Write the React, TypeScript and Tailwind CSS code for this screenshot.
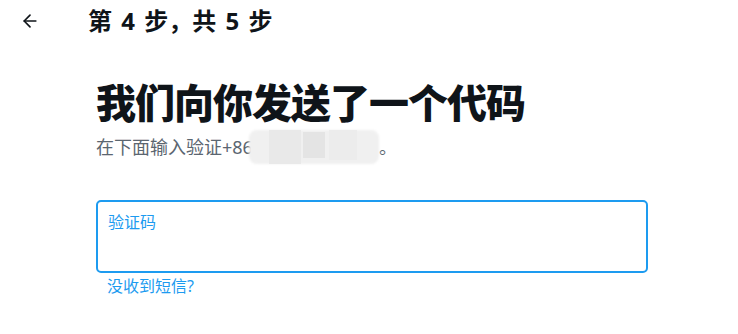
import { ArrowLeft } from 'lucide-react';

export default function App() {
  return (
    <div
      className="w-[738px] h-[334px] bg-white text-[#0f1419] overflow-hidden"
      style={{ fontFamily: '"Noto Sans", "Noto Sans CJK SC", sans-serif' }}
    >
      <div className="flex items-center h-[42px] pl-[20px]">
        <button className="w-[20px] h-[20px] flex items-center justify-center text-[#0f1419]">
          <ArrowLeft size={20} strokeWidth={2} />
        </button>
        <h1 className="ml-[48px] text-[24px] font-bold leading-none [word-spacing:3px]">第 4 步，共 5 步</h1>
      </div>

      <div className="ml-[96px] w-[552px]">
        <h2 className="mt-[36px] text-[40px] font-black leading-[50px] tracking-tight">
          我们向你发送了一个代码
        </h2>
        <p className="mt-[2px] flex items-center text-[18px] leading-[26px] text-[#5b6670]">
          <span>在下面输入验证+86</span>
          <span className="relative w-[130px] h-[34px] -ml-[4px]">
            <span className="absolute inset-0 rounded-[8px] bg-[#f0f0f0] blur-[1px]" />
            <span className="absolute left-[20px] top-0 w-[32px] h-[34px] bg-[#e9e9e9]" />
            <span className="absolute left-[54px] top-[2px] w-[22px] h-[26px] bg-[#e4e4e4]" />
            <span className="absolute left-[80px] top-0 w-[28px] h-[30px] bg-[#ececec]" />
          </span>
          <span>。</span>
        </p>

        <div className="mt-[36px] h-[73px] rounded-[5px] border-2 border-[#1d9bf0] px-[10px] pt-[9px]">
          <label className="block text-[16px] leading-[22px] text-[#1d9bf0]">验证码</label>
          <input className="w-full outline-none bg-transparent text-[17px]" />
        </div>
        <a className="block mt-[2px] ml-[11px] text-[16px] leading-[22px] text-[#1d9bf0]">没收到短信?</a>
      </div>
    </div>
  );
}
